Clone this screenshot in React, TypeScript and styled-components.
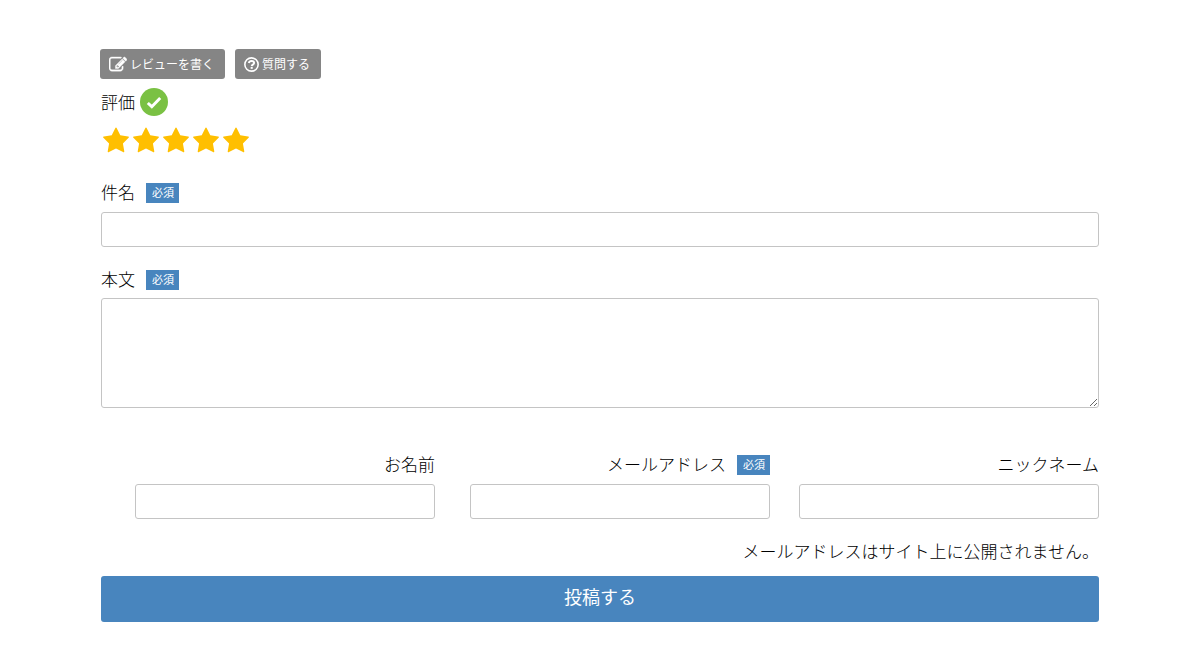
import React, { useState } from "react";
import styled, { createGlobalStyle, css } from "styled-components";

const blue = "#4885be";

const GlobalStyle = createGlobalStyle`
  *, *::before, *::after { box-sizing: border-box; }
  body {
    margin: 0;
    background: #fff;
    color: #000;
    font-family: "Noto Sans CJK JP", sans-serif;
    font-size: 17px;
    font-weight: 300;
    line-height: 24px;
  }
  button, input, textarea { font: inherit; }
`;

const Page = styled.main`
  padding: 49px 100px 28px;
`;

const Tabs = styled.div`
  display: flex;
  gap: 10px;
`;

const TabButton = styled.button`
  display: flex;
  align-items: center;
  gap: 3px;
  height: 30px;
  padding: 0 11px 0 9px;
  border: 0;
  border-radius: 3px;
  background: #858585;
  color: #fff;
  font-size: 12px;
  font-weight: 400;
  line-height: 28px;
  white-space: nowrap;
  cursor: pointer;
`;

const TabIcon = styled.svg`
  width: 18px;
  height: 18px;
  flex: none;
  fill: currentColor;
`;

const RoundIcon = styled(TabIcon)`
  width: 15px;
  height: 15px;
`;

const Form = styled.form`
  padding: 9px 1px 0;
`;

const Rating = styled.fieldset`
  margin: 0 0 28px;
  padding: 0;
  border: 0;
`;

const RatingTitle = styled.legend`
  display: flex;
  align-items: center;
  gap: 5px;
  padding: 0;
`;

const CheckMark = styled.svg`
  width: 28px;
  height: 28px;
`;

const Stars = styled.div`
  display: flex;
  gap: 2px;
  padding: 11px 0 0 1px;
`;

const Star = styled.label<{ $on: boolean }>`
  position: relative;
  display: flex;
  color: ${(p) => (p.$on ? "#ffbf00" : "#ccc")};
  cursor: pointer;

  svg {
    width: 28px;
    height: 28px;
    fill: currentColor;
  }

  input {
    position: absolute;
    inset: 0;
    margin: 0;
    opacity: 0;
    cursor: pointer;
  }
`;

const Field = styled.div<{ $end?: boolean; $before?: number }>`
  display: flex;
  flex-direction: column;
  flex: 1;
  min-width: 0;
  margin-left: ${(p) => p.$before ?? 0}px;
  align-items: ${(p) => (p.$end ? "flex-end" : "flex-start")};
`;

const Label = styled.label`
  display: flex;
  align-items: flex-start;
  gap: 11px;
  height: 20px;
  margin-bottom: 8px;
  line-height: 18px;
  white-space: nowrap;
`;

const Badge = styled.span`
  height: 20px;
  padding: 0 5px 0 6px;
  background: ${blue};
  color: #fff;
  font-size: 11px;
  font-weight: 400;
`;

const box = css`
  display: block;
  width: 100%;
  border: 1px solid #c4c4c4;
  border-radius: 3px;
  background: #fff;
  color: inherit;
`;

const TextInput = styled.input`
  ${box}
  height: 35px;
  margin: 1px 0 0;
  padding: 4px 10px;
`;

const TextArea = styled.textarea`
  ${box}
  height: 110px;
  padding: 8px 10px;
  resize: vertical;
`;

const Stack = styled.div`
  display: flex;
  flex-direction: column;
  gap: 23px;
`;

const Contact = styled.div`
  display: flex;
  margin-top: 47px;
`;

const Note = styled.p`
  margin: 20px 0 13px;
  text-align: right;
`;

const Submit = styled.button`
  display: block;
  width: 100%;
  height: 46px;
  padding: 0 0 6px;
  border: 0;
  border-radius: 3px;
  background: ${blue};
  color: #fff;
  font-size: 18px;
  font-weight: 400;
  cursor: pointer;
`;

const Required = () => <Badge>必須</Badge>;

export default function App() {
  const [score, setScore] = useState(5);

  return (
    <>
      <GlobalStyle />
      <Page>
        <Tabs>
          <TabButton type="button">
            <TabIcon viewBox="0 -70 1792 1792" stroke="currentColor" strokeWidth="40" aria-hidden="true">
              <path d="M888 1184l116-116-152-152-116 116v56h96v96h56zm440-720q-16-16-33 1l-350 350q-17 17-1 33t33-1l350-350q17-17 1-33zm80 594v190q0 119-84.5 203.5t-203.5 84.5h-832q-119 0-203.5-84.5t-84.5-203.5v-832q0-119 84.5-203.5t203.5-84.5h832q63 0 117 25 15 7 18 23 3 17-9 29l-49 49q-14 14-32 8-23-6-45-6h-832q-66 0-113 47t-47 113v832q0 66 47 113t113 47h832q66 0 113-47t47-113v-126q0-13 9-22l64-64q15-15 35-7t20 29zm-96-738l288 288-672 672h-288v-288zm444 132l-92 92-288-288 92-92q28-28 68-28t68 28l152 152q28 28 28 68t-28 68z" />
            </TabIcon>
            レビューを書く
          </TabButton>
          <TabButton type="button">
            <RoundIcon viewBox="0 0 16 16" aria-hidden="true">
              <circle cx="8" cy="8" r="7.1" fill="none" stroke="currentColor" strokeWidth="1.7" />
              <path
                d="M5.1 6.300C5.500 4.800 6.600 4.200 8 4.200c1.600 0 2.800.9 2.800 2.200 0 1.700-2.500 1.700-2.600 3.300"
                fill="none"
                stroke="currentColor"
                strokeWidth="2"
              />
              <rect x="7.100" y="10.600" width="2.200" height="2" />
            </RoundIcon>
            質問する
          </TabButton>
        </Tabs>

        <Form onSubmit={(e) => e.preventDefault()}>
          <Rating>
            <RatingTitle>
              評価
              <CheckMark viewBox="0 0 28 28" aria-hidden="true">
                <circle cx="14" cy="14" r="14" fill="#7ac143" />
                <path d="M7.800 15l4 3.700 8.400-8.700" fill="none" stroke="#fff" strokeWidth="3" />
              </CheckMark>
            </RatingTitle>
            <Stars>
              {[1, 2, 3, 4, 5].map((n) => (
                <Star key={n} $on={n <= score}>
                  <input
                    type="radio"
                    name="score"
                    value={n}
                    aria-label={String(n)}
                    checked={n === score}
                    onChange={() => setScore(n)}
                  />
                  <svg viewBox="0 0 1792 1792" aria-hidden="true">
                    <path d="M1728 647q0 22-26 48l-363 354 86 500q1 7 1 20 0 21-10.5 35.500t-30.500 14.500q-19 0-40-12l-449-236-449 236q-22 12-40 12-21 0-31.500-14.500t-10.500-35.500q0-6 2-20l86-500-364-354q-25-27-25-48 0-37 56-46l502-73 225-455q19-41 49-41t49 41l225 455 502 73q56 9 56 46z" />
                  </svg>
                </Star>
              ))}
            </Stars>
          </Rating>

          <Stack>
            <Field>
              <Label htmlFor="subject">
                件名
                <Required />
              </Label>
              <TextInput id="subject" type="text" />
            </Field>
            <Field>
              <Label htmlFor="body">
                本文
                <Required />
              </Label>
              <TextArea id="body" />
            </Field>
          </Stack>

          <Contact>
            <Field $end $before={34}>
              <Label htmlFor="name">お名前</Label>
              <TextInput id="name" type="text" />
            </Field>
            <Field $end $before={35}>
              <Label htmlFor="email">
                メールアドレス
                <Required />
              </Label>
              <TextInput id="email" type="email" />
            </Field>
            <Field $end $before={29}>
              <Label htmlFor="nickname">ニックネーム</Label>
              <TextInput id="nickname" type="text" />
            </Field>
          </Contact>

          <Note>メールアドレスはサイト上に公開されません。</Note>
          <Submit type="submit">投稿する</Submit>
        </Form>
      </Page>
    </>
  );
}
